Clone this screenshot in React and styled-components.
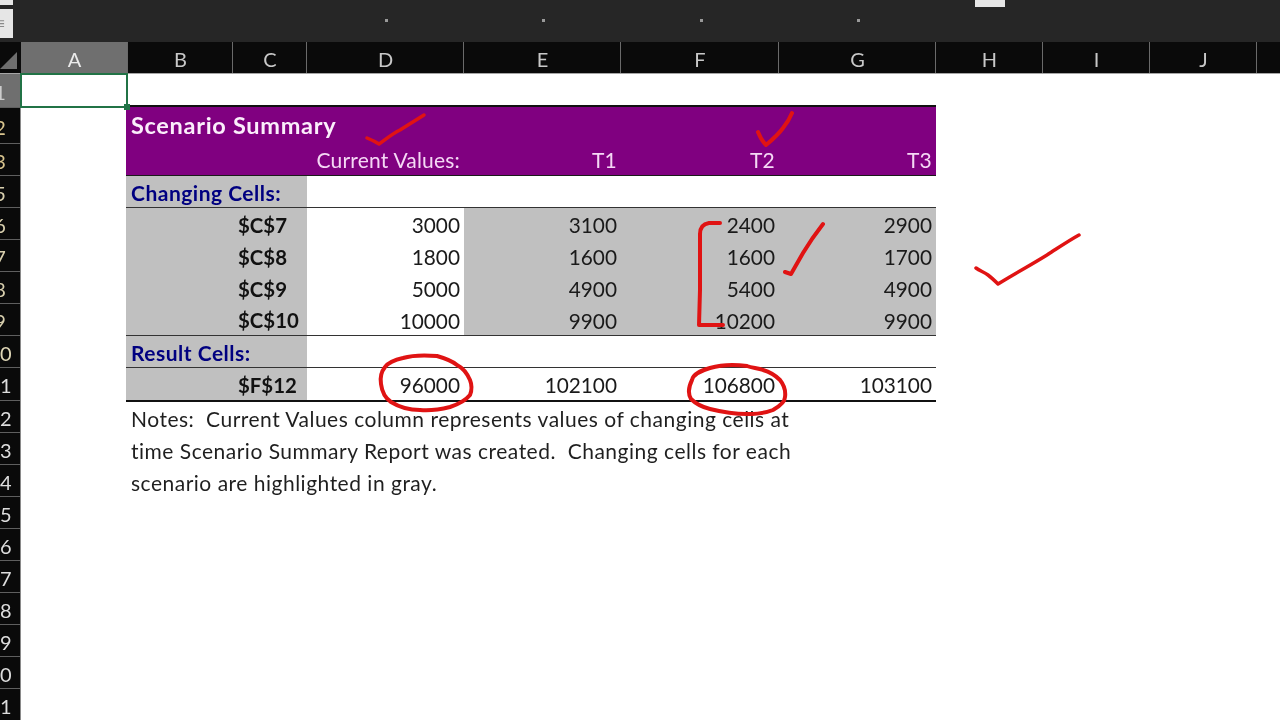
import React from "react";
import styled, { createGlobalStyle } from "styled-components";

const Global = createGlobalStyle`
  html, body { margin: 0; padding: 0; background: #fff; overflow: hidden; }
  body { font-family: "Lato", "Open Sans", sans-serif; }
`;

const Page = styled.div`
  position: relative;
  width: 1280px;
  height: 720px;
  overflow: hidden;
  display: flex;
  flex-direction: column;
  background: #fff;
  filter: blur(0.35px);
`;

/* ---------- top ribbon strip ---------- */
const Ribbon = styled.div`
  position: relative;
  height: 42px;
  flex: none;
  background: #262626;
  display: flex;
`;
const SideButtons = styled.div`
  width: 13px;
  flex: none;
  display: flex;
  flex-direction: column;
  gap: 4px;
`;
const SideButton = styled.div`
  height: ${p => p.$h}px;
  background: #e6e6e6;
  color: #8a8a8a;
  font-size: 16px;
  line-height: 28px;
  overflow: hidden;
  text-indent: -4px;
`;
const Dots = styled.div`
  width: 944px;
  margin-left: 298px;
  display: grid;
  grid-template-columns: repeat(4, 157.4px);
  height: 40px;
  align-items: center;
`;
const Dot = styled.span`
  width: 3px;
  height: 3px;
  background: #999;
  justify-self: start;
  margin-left: 74px;
`;
const RibbonTab = styled.div`
  position: absolute;
  left: 975px;
  top: 0;
  width: 30px;
  height: 7px;
  background: #e6e6e6;
`;

/* ---------- column headers ---------- */
const ColumnBar = styled.div`
  height: 32px;
  flex: none;
  display: flex;
  background: #0a0a0a;
  border-bottom: 1px solid #a6a6a6;
  box-sizing: border-box;
`;
const Corner = styled.div`
  width: 21px;
  flex: none;
  display: flex;
  align-items: flex-end;
  justify-content: flex-end;
  padding: 0 4px 4px 0;
  box-sizing: border-box;
`;
const ColHead = styled.div`
  width: ${p => p.$w}px;
  flex: none;
  box-sizing: border-box;
  display: flex;
  align-items: center;
  justify-content: center;
  font-size: 20px;
  padding: 2px 0 0 1px;
  color: ${p => (p.$active ? "#eaeaea" : "#c8c8c8")};
  background: ${p => (p.$active ? "#6f6f6f" : "transparent")};
  border-right: 1px solid #6a6a6a;
`;

/* ---------- body ---------- */
const Body = styled.div`
  flex: 1;
  display: flex;
  min-height: 0;
`;
const RowBar = styled.div`
  width: 21px;
  flex: none;
  background: #0a0a0a;
  border-right: 1px solid #8a8a8a;
  box-sizing: border-box;
  overflow: hidden;
`;
const RowHead = styled.div`
  width: 40px;
  margin-left: -20px;
  height: ${p => p.$h}px;
  box-sizing: border-box;
  display: flex;
  align-items: center;
  justify-content: center;
  padding-top: 2px;
  font-size: 20px;
  color: ${p => p.$tint};
  background: ${p => (p.$active ? "#6f6f6f" : "transparent")};
  border-bottom: 1px solid #5f5f5f;
`;

const Sheet = styled.div`
  position: relative;
  flex: 1;
  padding: 31px 0 0 105px;
  color: #1a1a1a;
`;
const SelectedCell = styled.div`
  position: absolute;
  z-index: 1;
  left: -1px;
  top: -1px;
  width: 108px;
  height: 35px;
  box-sizing: border-box;
  border: 2px solid #217346;
  &::after {
    content: "";
    position: absolute;
    right: -4px;
    bottom: -4px;
    width: 6px;
    height: 6px;
    background: #217346;
  }
`;

const SummaryTable = styled.div`
  width: 810px;
  display: grid;
  grid-template-columns: 181px 157px 157px 158px 157px;
  grid-template-rows: 37px repeat(8, 32px);
  border-top: 2px solid #111;
  border-bottom: 2px solid #111;
  font-size: 20.8px;
`;
const TitleCell = styled.div`
  grid-column: 1 / -1;
  background: #800080;
  color: #fbeefb;
  font-weight: 700;
  font-size: 23.5px;
  letter-spacing: 0.7px;
  padding: 0 0 2px 5px;
  display: flex;
  align-items: center;
`;
const HeadCell = styled.div`
  background: #800080;
  color: #f5d8f5;
  font-size: 21px;
  letter-spacing: 0.2px;
  display: flex;
  align-items: center;
  justify-content: flex-end;
  padding-right: 4px;
  border-bottom: 1px solid #1a1a1a;
  box-sizing: border-box;
`;
const SectionLabel = styled.div`
  background: #c0c0c0;
  color: #000080;
  font-weight: 700;
  font-size: 21px;
  letter-spacing: 0.5px;
  padding: 1px 0 0 5px;
  display: flex;
  align-items: center;
  border-bottom: 1px solid #333;
  box-sizing: border-box;
`;
const SectionFill = styled.div`
  grid-column: 2 / -1;
  border-bottom: 1px solid #333;
`;
const RefCell = styled.div`
  background: #c0c0c0;
  color: #111;
  font-weight: 700;
  font-size: 20.4px;
  padding: 1px 0 0 112px;
  display: flex;
  align-items: center;
  border-bottom: ${p => (p.$rule ? "1px solid #333" : "none")};
  box-sizing: border-box;
`;
const ValueCell = styled.div`
  background: ${p => (p.$gray ? "#c0c0c0" : "#fff")};
  display: flex;
  align-items: center;
  justify-content: flex-end;
  padding: 1px 4px 0 0;
  border-bottom: ${p => (p.$rule ? "1px solid #333" : "none")};
  box-sizing: border-box;
`;
const Notes = styled.p`
  margin: 0;
  padding: 1px 0 0 5px;
  font-size: 21px;
  letter-spacing: 0.5px;
  line-height: 32px;
  width: 760px;
  color: #1f1f1f;
  white-space: pre-wrap;
`;

/* ---------- red pen layer ---------- */
const Ink = styled.svg`
  position: absolute;
  inset: 0;
  width: 1280px;
  height: 720px;
  pointer-events: none;
  fill: none;
  stroke: #e01313;
  stroke-linecap: round;
  stroke-linejoin: round;
`;
const Stroke = styled.path`
  stroke-width: ${p => p.$w};
`;

const columns = [
  ["A", 107, true], ["B", 105], ["C", 74], ["D", 157], ["E", 157], ["F", 158],
  ["G", 157], ["H", 107], ["I", 107], ["J", 107], ["", 30],
];
const rows = [
  ["1", 34, "#ccc", true], ["2", 36, "#d8c48e"], ["3", 32, "#d8c48e"], ["5", 32, "#d8cfae"],
  ["6", 32, "#d8cfae"], ["7", 32, "#d8cfae"], ["8", 32, "#d8cfae"], ["9", 32, "#d8cfae"],
  ["10", 32, "#e0d8b8"], ["11", 33, "#ddd"], ["12", 32, "#ddd"], ["13", 32, "#ddd"],
  ["14", 32, "#ddd"], ["15", 32, "#ddd"], ["16", 32, "#ddd"], ["17", 32, "#ddd"],
  ["18", 32, "#ddd"], ["19", 32, "#ddd"], ["20", 32, "#ddd"], ["21", 32, "#ddd"],
];
const changing = [
  ["$C$7", "3000", "3100", "2400", "2900"],
  ["$C$8", "1800", "1600", "1600", "1700"],
  ["$C$9", "5000", "4900", "5400", "4900"],
  ["$C$10", "10000", "9900", "10200", "9900"],
];

export default function App() {
  return (
    <Page>
      <Global />
      <Ribbon>
        <SideButtons>
          <SideButton $h={5} />
          <SideButton $h={29}>≡</SideButton>
        </SideButtons>
        <Dots>
          <Dot /><Dot /><Dot /><Dot />
        </Dots>
        <RibbonTab />
      </Ribbon>
      <ColumnBar>
        <Corner>
          <svg width="17" height="17" viewBox="0 0 17 17"><path d="M17 0V17H0Z" fill="#6e6e6e" /></svg>
        </Corner>
        {columns.map(([n, w, a]) => (
          <ColHead key={n || "K"} $w={w} $active={a}>{n}</ColHead>
        ))}
      </ColumnBar>
      <Body>
        <RowBar>
          {rows.map(([n, h, tint, a]) => (
            <RowHead key={n} $h={h} $tint={tint} $active={a}>{n}</RowHead>
          ))}
        </RowBar>
        <Sheet>
          <SelectedCell />
          <SummaryTable>
            <TitleCell>Scenario Summary</TitleCell>
            <HeadCell />
            <HeadCell>Current Values:</HeadCell>
            <HeadCell>T1</HeadCell>
            <HeadCell>T2</HeadCell>
            <HeadCell>T3</HeadCell>
            <SectionLabel>Changing Cells:</SectionLabel>
            <SectionFill />
            {changing.map((r, i) => (
              <React.Fragment key={r[0]}>
                <RefCell $rule={i === 3}>{r[0]}</RefCell>
                <ValueCell $rule={i === 3}>{r[1]}</ValueCell>
                <ValueCell $rule={i === 3} $gray>{r[2]}</ValueCell>
                <ValueCell $rule={i === 3} $gray>{r[3]}</ValueCell>
                <ValueCell $rule={i === 3} $gray>{r[4]}</ValueCell>
              </React.Fragment>
            ))}
            <SectionLabel>Result Cells:</SectionLabel>
            <SectionFill />
            <RefCell>$F$12</RefCell>
            <ValueCell>96000</ValueCell>
            <ValueCell>102100</ValueCell>
            <ValueCell>106800</ValueCell>
            <ValueCell>103100</ValueCell>
          </SummaryTable>
          <Notes>{"Notes:  Current Values column represents values of changing cells at\ntime Scenario Summary Report was created.  Changing cells for each\nscenario are highlighted in gray."}</Notes>
        </Sheet>
      </Body>
      <Ink viewBox="0 0 1280 720">
        <Stroke $w={3.5} d="M367 138C372 140 376 142 379 144C386 139 392 134 400 130C408 125 416 120 424 115" />
        <Stroke $w={4} d="M758 132C760 137 763 142 766 145C772 140 778 135 783 128C787 123 790 118 792 113" />
        <Stroke $w={4} d="M785 272L791 274C795 267 799 260 803 253C809 243 816 233 823 224" />
        <Stroke $w={4} d="M720 223H709C703 224 700 228 700 234V263L700 290L699 325H723" />
        <Stroke $w={4} d="M747 366C733 364 720 365 710 368C700 371 693 374 692 380C688 388 688 394 691 399C696 404 702 407 710 409C722 412 735 414 747 414C757 414 766 413 773 410C780 406 785 402 785 397C786 390 784 385 780 380C775 375 770 372 763 370C758 368 752 368 747 366" />
        <Stroke $w={4} d="M437 356C425 355 413 355 403 358C394 360 388 363 385 367C381 372 380 378 381 384C382 392 385 398 391 402C399 407 409 410 420 410C431 411 442 409 450 407C459 404 466 400 470 395C472 390 472 385 470 380C467 373 463 368 457 365C451 360 444 358 437 356" />
        <Stroke $w={3.5} d="M976 268C980 271 984 272 988 275C992 278 995 281 998 284C1014 274 1031 265 1047 255C1058 248 1068 241 1079 235" />
      </Ink>
    </Page>
  );
}
